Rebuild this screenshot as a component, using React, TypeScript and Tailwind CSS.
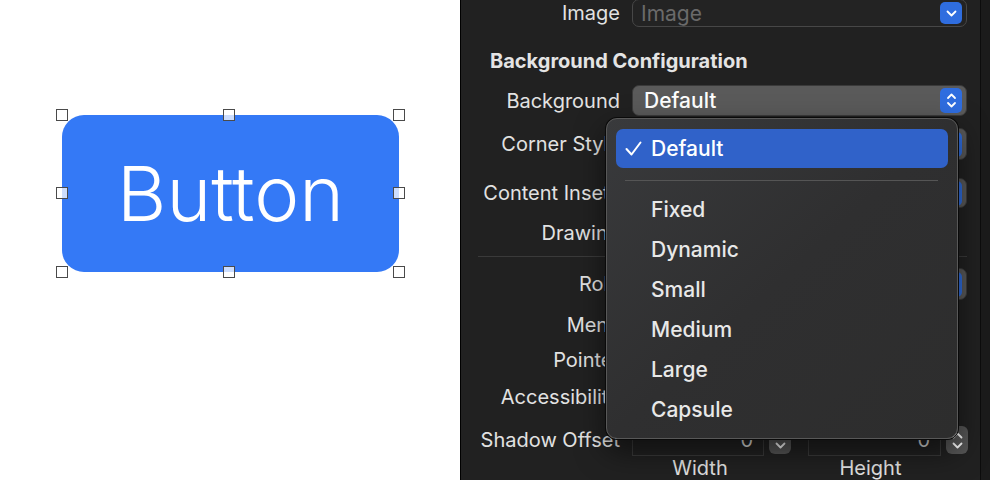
import React from 'react';

function ChevronDown() {
  return (
    <svg width="11" height="7" viewBox="0 0 11 7" fill="none">
      <path d="M1.5 1.5l4 4 4-4" stroke="white" strokeWidth="1.8" strokeLinecap="round" strokeLinejoin="round" />
    </svg>
  );
}

function UpDown() {
  return (
    <svg width="11" height="17" viewBox="0 0 11 17" fill="none">
      <path d="M2 6l3.5-3.5L9 6" stroke="white" strokeWidth="1.8" strokeLinecap="round" strokeLinejoin="round" />
      <path d="M2 11l3.5 3.5L9 11" stroke="white" strokeWidth="1.8" strokeLinecap="round" strokeLinejoin="round" />
    </svg>
  );
}

function Popup({ value }: { value?: string }) {
  return (
    <div className="flex h-full items-center justify-between rounded-[7px] border border-[#3a3a3a] bg-[#5a5a5a] pl-[11px] pr-[4px]">
      <span className="text-[21px] font-medium leading-none text-white">{value}</span>
      <div className="flex h-[25px] w-[22px] items-center justify-center rounded-[5px] bg-[#2f6ddf]">
        <UpDown />
      </div>
    </div>
  );
}

function Stepper() {
  return (
    <div className="flex h-[28px] w-[22px] flex-col items-center justify-center gap-[3px] rounded-[6px] bg-[#565656]">
      <svg width="11" height="7" viewBox="0 0 11 7" fill="none">
        <path d="M1.5 5.5l4-4 4 4" stroke="white" strokeWidth="1.8" strokeLinecap="round" strokeLinejoin="round" />
      </svg>
      <ChevronDown />
    </div>
  );
}

function Label({ children }: { children: React.ReactNode }) {
  return <span className="text-right text-[20px] leading-none text-[#e2e2e2]">{children}</span>;
}

function Handle({ pos }: { pos: string }) {
  return <div className={`absolute h-[12px] w-[12px] border-[1.5px] border-[#4a4a4a] bg-white/75 ${pos}`} />;
}

const menuItems = ['Fixed', 'Dynamic', 'Small', 'Medium', 'Large', 'Capsule'];

export default function App() {
  return (
    <div className="flex h-[480px] w-[990px] overflow-hidden font-['Inter','Noto_Sans',sans-serif]">
      {/* canvas */}
      <div className="h-full w-[460px] shrink-0 bg-white pl-[62px] pt-[115px]">
        <div className="relative flex h-[157px] w-[337px] items-center justify-center rounded-[22px] bg-[#3479f6]">
          <span className="pb-[2px] text-[76px] font-light leading-none text-white">Button</span>
          <Handle pos="-left-[6px] -top-[6px]" />
          <Handle pos="left-[161px] -top-[6px]" />
          <Handle pos="-right-[6px] -top-[6px]" />
          <Handle pos="-left-[6px] top-[72px]" />
          <Handle pos="-right-[6px] top-[72px]" />
          <Handle pos="-left-[6px] -bottom-[6px]" />
          <Handle pos="left-[161px] -bottom-[6px]" />
          <Handle pos="-right-[6px] -bottom-[6px]" />
        </div>
      </div>

      {/* inspector */}
      <div className="relative h-full w-[520px] shrink-0 border-l border-black bg-[#212121]">
        <div className="mt-[-1px] grid h-[28px] grid-cols-[159px_1fr] items-center gap-x-[12px] pr-[13px]">
          <Label>Image</Label>
          <div className="flex h-full items-center justify-between rounded-[7px] border border-[#474747] bg-[#232323] pl-[8px] pr-[4px]">
            <span className="text-[21px] leading-none text-[#6a6a6a]">Image</span>
            <div className="flex h-[22px] w-[22px] items-center justify-center rounded-[5px] bg-[#2f6ddf]">
              <ChevronDown />
            </div>
          </div>
        </div>

        <div className="ml-[29px] mt-[17px] flex h-[34px] items-center text-[20px] font-bold text-[#e4e4e4]">
          Background Configuration
        </div>

        <div className="mt-[7px] grid h-[31px] grid-cols-[159px_1fr] items-center gap-x-[12px] pr-[13px]">
          <Label>Background</Label>
          <Popup value="Default" />
        </div>

        <div className="mt-[12px] grid h-[32px] grid-cols-[159px_1fr] items-center gap-x-[12px] pr-[13px]">
          <Label>Corner Style</Label>
          <Popup value="Default" />
        </div>

        <div className="mt-[18px] grid h-[30px] grid-cols-[159px_1fr] items-center gap-x-[12px] pr-[13px]">
          <Label>Content Insets</Label>
          <Popup value="Default" />
        </div>

        <div className="mt-[12px] grid h-[26px] grid-cols-[159px_1fr] items-center gap-x-[12px] pr-[13px]">
          <Label>Drawing</Label>
          <div />
        </div>

        <div className="ml-[17px] mr-[13px] mt-[10px] h-px bg-[#3a3a3a]" />

        <div className="mt-[11px] grid h-[32px] grid-cols-[159px_1fr] items-center gap-x-[12px] pr-[13px]">
          <Label>Role</Label>
          <Popup value="Default" />
        </div>

        <div className="mt-[10px] grid h-[30px] grid-cols-[159px_1fr] items-center gap-x-[12px] pr-[13px]">
          <Label>Menu</Label>
          <div />
        </div>

        <div className="mt-[6px] grid h-[28px] grid-cols-[159px_1fr] items-center gap-x-[12px] pr-[13px]">
          <Label>Pointer</Label>
          <div />
        </div>

        <div className="mt-[9px] grid h-[28px] grid-cols-[159px_1fr] items-center gap-x-[12px] pr-[13px]">
          <Label>Accessibility</Label>
          <div />
        </div>

        <div className="mt-[13px] grid h-[30px] grid-cols-[159px_1fr] items-center gap-x-[12px] pr-[13px]">
          <Label>Shadow Offset</Label>
          <div className="flex h-full items-center">
            <div className="flex h-full w-[132px] items-center justify-end border border-[#3a3a3a] pr-[10px] text-[20px] text-[#dedede]">0</div>
            <div className="ml-[5px]"><Stepper /></div>
            <div className="ml-[17px] flex h-full w-[133px] items-center justify-end border border-[#3a3a3a] pr-[10px] text-[20px] text-[#dedede]">0</div>
            <div className="ml-[5px]"><Stepper /></div>
          </div>
        </div>

        <div className="mt-[2px] grid h-[24px] grid-cols-[159px_1fr] items-center gap-x-[12px] pr-[13px]">
          <div />
          <div className="flex text-[20px] leading-none text-[#e2e2e2]">
            <span className="ml-[2px] w-[132px] text-center">Width</span>
            <span className="ml-[38px] w-[133px] text-center">Height</span>
          </div>
        </div>

        {/* dropdown menu */}
        <div className="absolute left-[145px] top-[118px] w-[352px] rounded-[11px] border border-[#585858] bg-gradient-to-br from-[#393a3c] via-[#2f2f30] to-[#2d2d2d] px-[9px] pb-[9px] pt-[10px] shadow-[0_0_0_1px_#0a0a0a,0_12px_30px_rgba(0,0,0,0.55)]">
          <div className="flex h-[39px] items-center rounded-[7px] bg-[#3062c9] pl-[9px] text-[21px] font-medium leading-none text-white">
            <svg width="17" height="15" viewBox="0 0 17 15" fill="none" className="mr-[9px]">
              <path d="M1.5 8l5 5.5L15.5 1.5" stroke="white" strokeWidth="2" strokeLinecap="round" strokeLinejoin="round" />
            </svg>
            <span>Default</span>
          </div>
          <div className="ml-[9px] mr-[10px] mt-[12px] h-px bg-[#555555]" />
          <div className="mt-[8px]">
            {menuItems.map((item) => (
              <div key={item} className="flex h-[40px] items-center pl-[35px] text-[21px] font-medium leading-none text-[#e8e8e8]">
                {item}
              </div>
            ))}
          </div>
        </div>
      </div>

      <div className="h-full flex-1 border-l border-[#0c0c0c] bg-[#1b1b1b]" />
    </div>
  );
}
